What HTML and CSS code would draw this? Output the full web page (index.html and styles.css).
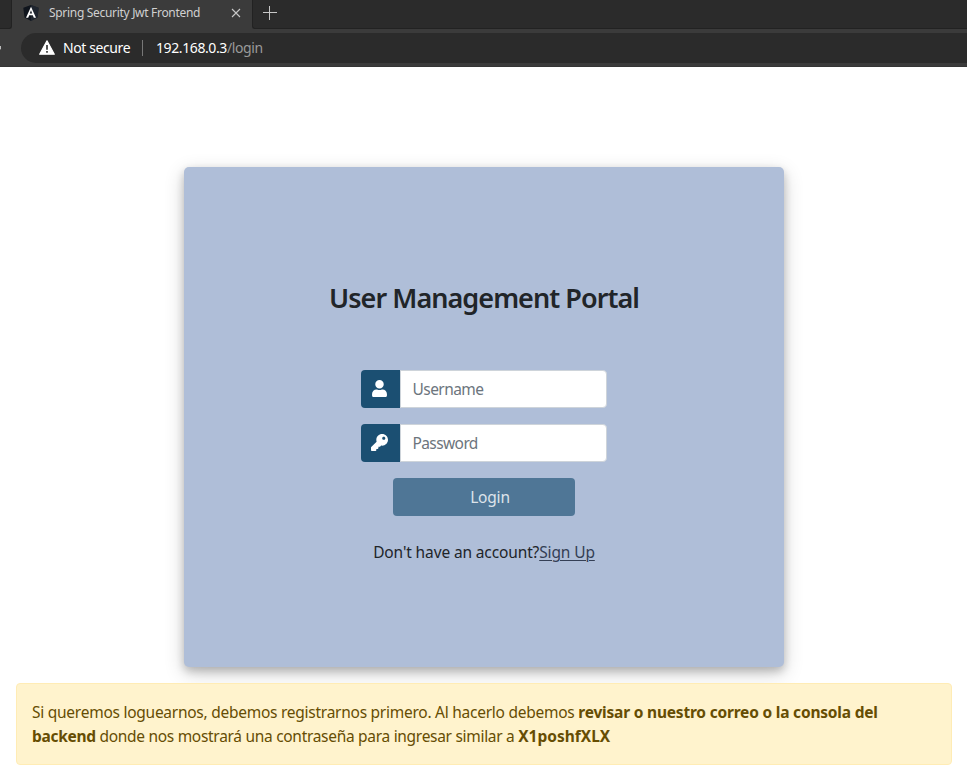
FILE: index.html
```html
<!DOCTYPE html>
<html lang="en">
<head>
<meta charset="utf-8">
<title>Spring Security Jwt Frontend</title>
<link rel="stylesheet" href="styles.css">
</head>
<body>
<header class="browser">
  <div class="tabs">
    <div class="tab-prev"></div>
    <div class="tab">
      <svg class="favicon" width="16" height="16" viewBox="0 0 16 16"><path fill="#10151d" d="M8 0l7.7 2.7-1.2 9.9L8 16l-6.500-3.400L.3 2.700z"/><path fill="#2a303c" d="M8 0l7.700 2.700-1.200 9.900L8 16z" opacity=".6"/><path fill="#fff" fill-rule="evenodd" d="M8 1.800L3 12.800H5.200l1-2.500h3.600l1 2.500H13zM8 5.300L9.200 8.500H6.800z"/></svg>
      <span class="tab-title">Spring Security Jwt Frontend</span>
      <svg class="close" width="10" height="10" viewBox="0 0 10 10"><path d="M1 1l8 8M9 1L1 9" stroke="#c8c8c8" stroke-width="1.1"/></svg>
    </div>
    <div class="tab-rest">
      <svg width="14" height="14" viewBox="0 0 14 14"><path d="M6.500 0v14M0 6.500h14" stroke="#c8c8c8"/></svg>
    </div>
  </div>
  <div class="toolbar">
    <svg class="reload" width="2" height="8" viewBox="0 0 2 8"><path fill="#ddd" d="M0 2h.8v2.500L0 6z"/></svg>
    <div class="address">
      <svg class="warn" width="16" height="15" viewBox="0 0 16 15"><path fill="#fff" stroke="#fff" stroke-width="1.200" stroke-linejoin="round" d="M8 .8l7.300 13.400H.7z"/><path d="M8 5v4.700M8 11v1.700" stroke="#2b2b2b" stroke-width="1.600"/></svg>
      <span class="secure">Not secure</span>
      <span class="divider"></span>
      <span class="url">192.168.0.3<span class="path">/login</span></span>
    </div>
  </div>
</header>
<main>
  <section class="card">
    <h1>User Management Portal</h1>
    <form>
      <label class="field">
        <span class="addon"><svg width="15" height="17" viewBox="0 0 448 512"><path fill="#fff" d="M224 256c70.700 0 128-57.300 128-128S294.700 0 224 0 96 57.300 96 128s57.300 128 128 128zm89.600 32h-16.700c-22.200 10.200-46.900 16-72.900 16s-50.600-5.800-72.900-16h-16.700C60.200 288 0 348.200 0 422.400V464c0 26.500 21.500 48 48 48h352c26.500 0 48-21.500 48-48v-41.600c0-74.200-60.200-134.400-134.400-134.400z"/></svg></span>
        <input type="text" placeholder="Username">
      </label>
      <label class="field">
        <span class="addon"><svg width="17" height="17" viewBox="0 0 512 512"><path fill="#fff" d="M512 176c0 97.200-78.800 176-176 176-11.200 0-22.200-1.100-32.800-3.100l-24 27A24 24 0 0 1 261.200 384H224v40c0 13.300-10.700 24-24 24h-40v40c0 13.300-10.700 24-24 24H24c-13.300 0-24-10.700-24-24v-78.100c0-6.400 2.500-12.500 7-17l161.800-161.800A176 176 0 0 1 160 176C160 78.800 238.800 0 336 0c97.500 0 176 78.500 176 176zm-176-48c0 26.500 21.500 48 48 48s48-21.500 48-48-21.500-48-48-48-48 21.500-48 48z"/></svg></span>
        <input class="password" type="password" placeholder="Password">
      </label>
      <button type="button">Login</button>
    </form>
    <p class="signup">Don't have an account?<a href="#">Sign Up</a></p>
  </section>
  <div class="alert">
    <div class="line-one">Si queremos loguearnos, debemos registrarnos primero. Al hacerlo debemos <b>revisar o nuestro correo o la consola del</b></div>
    <div class="line-two"><b>backend</b> donde nos mostrará una contraseña para ingresar similar a <b class="code">X1poshfXLX</b></div>
  </div>
</main>
</body>
</html>
```
FILE: styles.css
```css
* { box-sizing: border-box; }
body {
  margin: 0;
  background: #fff;
  color: #212529;
  font: 15.5px/24px "Segoe UI", "Noto Sans", sans-serif;
  overflow: hidden;
}
.browser { height: 67px; background: #3b3b3b; border-bottom: 1px solid #353535; }
.tabs { display: flex; height: 29px; background: #3b3b3b; }
.tab-prev { width: 12px; height: 29px; background: #2b2b2b; border-right: 1px solid #222; border-bottom: 1px solid #222; border-bottom-right-radius: 3px; }
.tab { display: flex; align-items: center; width: 240px; padding: 0 10px 3px 11px; }
.tab-title { flex: 1; margin-left: 10px; color: #d0d0d0; font-size: 12px; letter-spacing: -0.31px; white-space: nowrap; }
.close { margin-right: 1px; }
.tab-rest { flex: 1; height: 29px; background: #2b2b2b; border-left: 1px solid #222; border-bottom: 1px solid #222; border-bottom-left-radius: 3px; padding: 6px 0 0 10px; }
.tab-rest svg, .warn, .favicon, .close { display: block; }
.toolbar { display: flex; align-items: center; height: 37px; padding-top: 1px; }
.reload { width: 2px; }
.address { flex: 1; display: flex; align-items: center; height: 30px; margin: 0 0 1px 19px; padding-left: 18px; background: #2b2b2b; border-radius: 15px 0 0 15px; font-size: 14px; letter-spacing: -0.4px; color: #fff; white-space: nowrap; }
.secure { width: 79px; padding-left: 8px; }
.divider { width: 1px; height: 16px; margin: 0 13px 0 8px; background: #777; }
.path { color: #9a9a9a; }
main { padding: 100px 15px 0 16px; }
.card {
  display: flex; flex-direction: column; align-items: center;
  width: 600px; height: 500px; margin: 0 auto 16px; padding-top: 114px;
  background: #afbed8; border-radius: 5px;
  box-shadow: 0 4px 8px rgba(0,0,0,.2), 0 6px 20px rgba(0,0,0,.19);
}
h1 { margin: 0 0 55px; font-size: 27px; line-height: 34px; font-weight: 600; letter-spacing: -0.95px; white-space: nowrap; }
form { display: flex; flex-direction: column; align-items: center; gap: 16px; }
.field { display: flex; width: 246px; height: 38px; }
.addon { display: flex; align-items: center; justify-content: center; width: 39px; background: #1b4f72; border-radius: 4px 0 0 4px; }
.addon svg { margin: 0 2px 1px 0; }
input { width: 207px; height: 38px; padding: 0 11.5px; border: 1px solid #ced4da; border-radius: 0 4px 4px 0; background: #fff; font: inherit; letter-spacing: -0.55px; outline: 0; }
.password { letter-spacing: -0.6px; }
input::placeholder { color: #6c757d; opacity: 1; }
button { width: 182px; height: 38px; padding: 0 0 0 12px; border: 0; border-radius: 4px; background: #4f7696; color: #dde3ea; font: inherit; letter-spacing: -0.2px; }
.signup { margin: 24px 0 0; letter-spacing: -0.13px; white-space: nowrap; }
.signup a { color: #343f55; text-decoration: underline; text-underline-offset: 2px; text-decoration-thickness: 1px; }
.alert {
  position: relative;
  height: 82px; padding: 16px 15px;
  background: #fff3cd; border: 1px solid #ffecb5; border-radius: 4px;
  color: #664d03; white-space: nowrap; letter-spacing: -0.3px;
}
.line-one { letter-spacing: -0.26px; }
.line-one b { letter-spacing: -0.2px; }
b { font-weight: 700; }
.code { letter-spacing: 0; }
```
